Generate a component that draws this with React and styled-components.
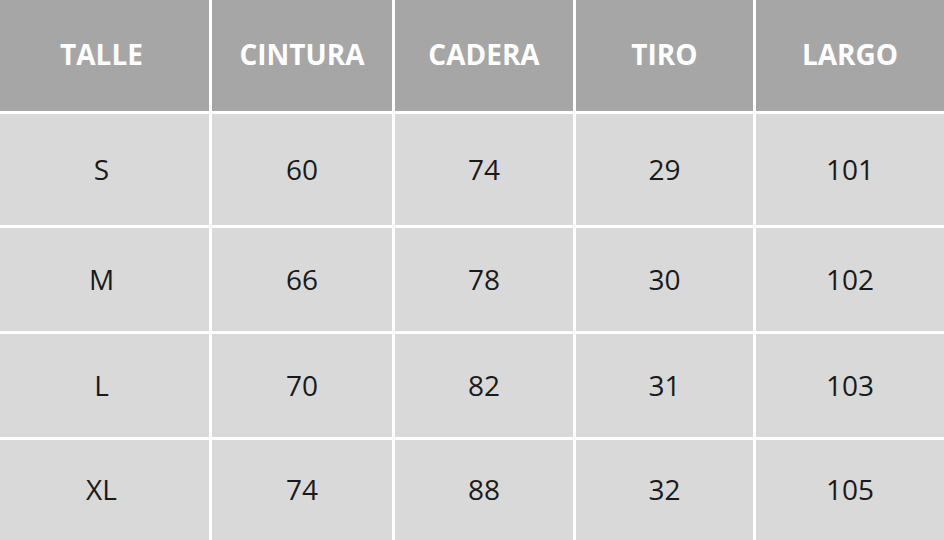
import React from "react";
import styled, { createGlobalStyle } from "styled-components";

const GlobalStyle = createGlobalStyle`
  html, body {
    margin: 0;
    padding: 0;
    background: #ffffff;
  }
  body {
    font-family: "Open Sans", "Liberation Sans", sans-serif;
  }
`;

const Grid = styled.div`
  display: grid;
  width: 944px;
  height: 540px;
  grid-template-columns: 209px 180px 178px 177px 1fr;
  grid-template-rows: 111px 111px 103px 103px 1fr;
  gap: 3px;
  background: #ffffff;
`;

const Cell = styled.div`
  display: flex;
  align-items: center;
  justify-content: center;
  padding-bottom: ${({ $head }) => ($head ? "4px" : "2px")};
  padding-right: ${({ $first }) => ($first ? "6px" : "0")};
  background: ${({ $head }) => ($head ? "#a6a6a6" : "#d9d9d9")};
  color: ${({ $head }) => ($head ? "#ffffff" : "#1a1a1a")};
  font-size: 28px;
  font-weight: ${({ $head }) => ($head ? 700 : 400)};
`;

const headers = ["TALLE", "CINTURA", "CADERA", "TIRO", "LARGO"];
const rows = [
  ["S", "60", "74", "29", "101"],
  ["M", "66", "78", "30", "102"],
  ["L", "70", "82", "31", "103"],
  ["XL", "74", "88", "32", "105"],
];

export default function App() {
  return (
    <>
      <GlobalStyle />
      <Grid>
        {headers.map((h, i) => (
          <Cell key={h} $head $first={i === 0}>
            {h}
          </Cell>
        ))}
        {rows.map((r) =>
          r.map((v, i) => (
            <Cell key={r[0] + i} $first={i === 0}>
              {v}
            </Cell>
          ))
        )}
      </Grid>
    </>
  );
}
